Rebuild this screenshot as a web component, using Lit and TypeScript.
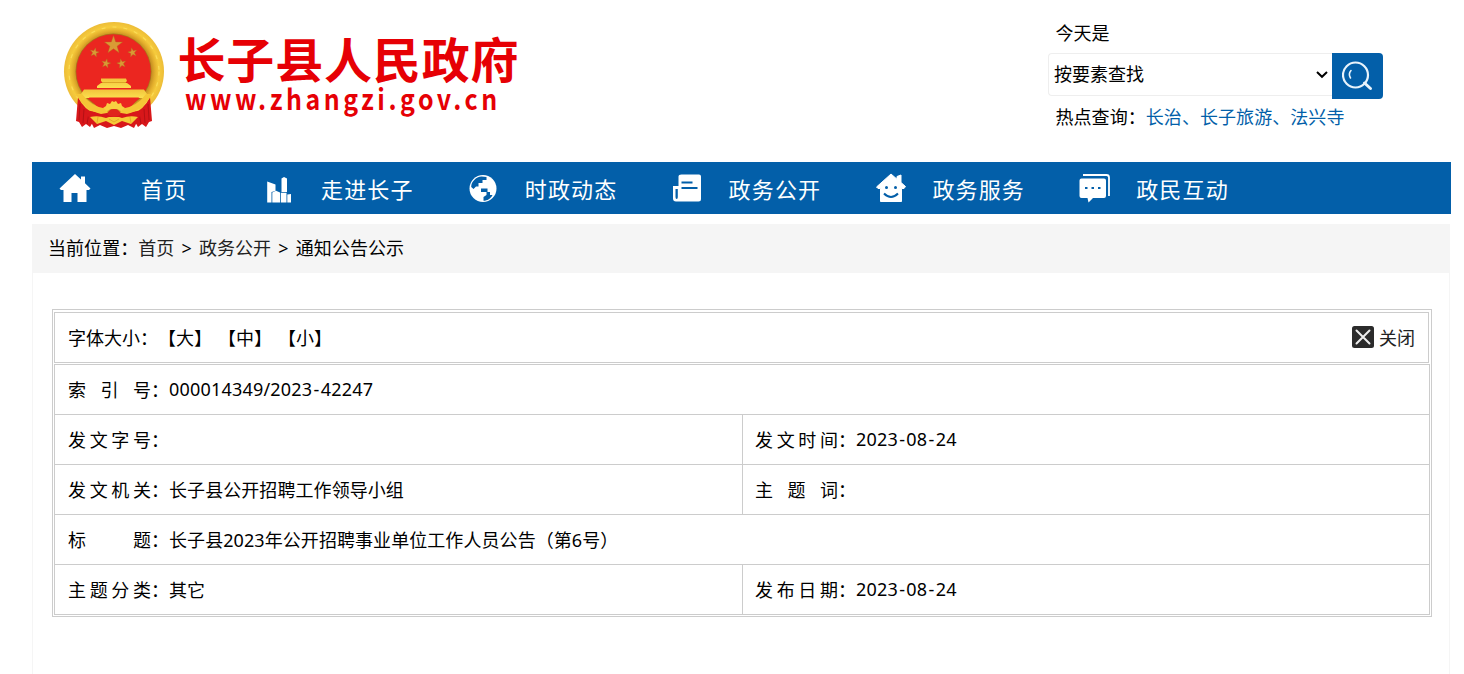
import { LitElement, html, svg, css, nothing } from 'lit';
import { customElement, property } from 'lit/decorators.js';

const fontStack = css`'Noto Sans', 'Noto Sans CJK SC', sans-serif`;

const navIcons: Record<string, unknown> = {
  home: svg`<path d="M16 1 L0.5 15.5 L2 17 H4.5 V29 H12.5 V20 H18.5 V29 H27.5 V17 H30 L31.5 15.5 L26 10.2 V3.5 H22 V6.5 Z"/>`,
  city: svg`
    <path d="M2.200 8.500 L10.500 11.500 V18 L6.500 19 V29.500 H2.200 Z"/>
    <path d="M16.500 5.500 L19 4 L22 5.500 V19 H16.500 Z"/>
    <path d="M7.300 19.500 L11 17.800 L15 19.500 V29.500 H7.300 Z"/>
    <path d="M15.800 19.800 H21.500 V29.500 H15.800 Z M22.300 21.500 L26 21 V29.500 H22.300 Z"/>`,
  globe: svg`
    <circle cx="14" cy="15.500" r="13.500"/>
    <path d="M12.500 3.500 L17.500 4 V7 H13.500 V10 H9.500 V13.500 H7 L4.500 16 L2.200 14 C2.200 8.500 7 4 12.500 3.500 Z" class="cut"/>
    <path d="M12 15.500 H18.500 V19 H21 V22 H23.500 C21.500 26 18.500 27.500 14.500 27.800 V24 L17.500 22 V19 H12 Z" class="cut"/>`,
  news: svg`
    <path d="M8.500 1.500 H26 Q28 1.500 28 3.500 V26 Q28 28.500 25.500 28.500 H3 Q0 28.500 0 25.500 V13 H5.500 V3.500 Q5.500 1.500 8.500 1.500 Z"/>
    <path d="M2.500 16 H4.800 V24 Q4.800 26 3.700 26 Q2.500 26 2.500 24 Z" class="cut"/>
    <path d="M8.500 9.500 H19.500 M8.500 15 H24.500" class="cut-line"/>`,
  service: svg`
    <path d="M15 1 L21 6.200 V3.500 L25 2 V9.500 L29.500 13.500 L28 15.500 H25.500 V28.500 H4.500 V15.500 H2 L0.500 14 Z" stroke="#fff" stroke-linejoin="round"/>
    <circle cx="10.500" cy="14.500" r="1.500" class="cut"/>
    <circle cx="19.500" cy="14.500" r="1.500" class="cut"/>
    <path d="M8 20.500 Q15 27.500 22 20.500" class="cut-line"/>`,
  chat: svg`
    <path d="M3 2 H26.500 Q29 2 29 4.500 V23" fill="none" stroke="#fff" stroke-width="1.800"/>
    <path d="M1.500 5.500 H24 Q26 5.500 26 7.500 V23 Q26 25 24 25 H13 L8.500 29.500 L7.500 25 H1.500 Q-0.500 25 -0.500 23 V7.500 Q-0.500 5.500 1.500 5.500 Z"/>
    <path d="M5 15 H7.500 M11.500 15 H14 M18 15 H20.500" class="cut-line"/>`
};

@customElement('site-logo')
export class SiteLogo extends LitElement {
  static styles = css`
    :host {
      display: block;
    }
    svg {
      display: block;
    }
    text {
      font-family: 'Noto Sans CJK SC', sans-serif;
      font-weight: 700;
      fill: #e60005;
    }
    .name {
      font-size: 48px;
    }
    .url {
      font-size: 29px;
    }
  `;

  star(cx: number, cy: number, r: number, turn = 0) {
    const points = Array.from({ length: 10 }, (_, i) => {
      const a = (i * 36 - 90 + turn) * Math.PI / 180;
      const d = i % 2 ? r * 0.4 : r;
      return `${(cx + d * Math.cos(a)).toFixed(2)},${(cy + d * Math.sin(a)).toFixed(2)}`;
    });
    return svg`<polygon points=${points.join(' ')} fill="#d99a35" stroke="#b5651f" stroke-width="0.4"/>`;
  }

  render() {
    return html`
      <svg width="470" height="120" viewBox="60 16 470 120">
        <defs>
          <radialGradient id="gold" cx="50%" cy="50%" r="50%">
            <stop offset="0.74" stop-color="#c08a20"/>
            <stop offset="0.82" stop-color="#e3ae2c"/>
            <stop offset="0.9" stop-color="#f6cb3c"/>
            <stop offset="1" stop-color="#edbd38"/>
          </radialGradient>
          <linearGradient id="gate" x1="0" y1="0" x2="0" y2="1">
            <stop offset="0" stop-color="#f2c33b"/>
            <stop offset="1" stop-color="#fbe04f"/>
          </linearGradient>
        </defs>
        <ellipse cx="114" cy="71.500" rx="50" ry="49.500" fill="url(#gold)"/>
        <ellipse cx="114" cy="71.500" rx="45" ry="44.500" fill="none" stroke="#fbdc58" stroke-width="1.200" stroke-dasharray="4 7"/>
        <circle cx="113.500" cy="71.500" r="38" fill="#a97419"/>
        <circle cx="113.500" cy="71.500" r="37.300" fill="#eb2620"/>
        ${this.star(113.5, 45, 9.5)}
        ${this.star(94.5, 52.5, 4.8, 12)}
        ${this.star(132.5, 52.5, 4.8, -12)}
        ${this.star(106, 63.5, 4.8, 12)}
        ${this.star(121.5, 63.5, 4.8, -12)}
        <path d="M101 78.500 H126 L127 81 L125 83 H127 L131 86 V88 H97 V86 L101 83 H103 L101 81 Z" fill="url(#gate)"/>
        <path d="M102 82.500 H126" stroke="#d59a20" stroke-width="0.800"/>
        <path d="M84 89.500 H144 L147 94 L144 98 H84 L81 94 Z" fill="url(#gate)"/>
        <path d="M89 97.500 H139 L130 108 H98 Z" fill="#eb2620"/>
        <path d="M78 97 Q84 110 97 115 L90 127 L86 124 L82 127 L79 122 L76 121 Z" fill="#d8171a"/>
        <path d="M150 97 Q144 110 131 115 L138 127 L142 124 L146 127 L149 122 L152 121 Z" fill="#d8171a"/>
        <path d="M80 104 L79 120 M84 109 L83 123 M89 113 L87 124 M148 104 L149 120 M144 109 L145 123 M139 113 L141 124" stroke="#b01014" stroke-width="0.900"/>
        <path d="M85 110 L102 113 H126 L143 110 L134 128 L128 125 L121 128 L114 126 L107 128 L100 125 L94 128 Z" fill="#d8171a"/>
        <path d="M76 94 Q84 110 101 114 L107 113 V109 Q91 107 82 94 Z M152 94 Q144 110 127 114 L121 113 V109 Q137 107 146 94 Z" fill="#f5c636"/>
        <path d="M103 108 L106 106 L107 103 L110 104 L112 101 L114 102 L116 101 L118 104 L121 103 L122 106 L125 108 L121 111 L117 109 H111 L107 111 Z" fill="#f8d041"/>
        <path d="M107 114 Q109 109 114 109 Q119 109 121 114 Q118 117 114 117 Q110 117 107 114 Z" fill="#e0251d"/>
        <path d="M90 117 Q98 115 106 118 L109 117 H119 L122 118 Q130 115 138 117 L131 124 L122 121 L114 125 L106 121 L97 124 Z" fill="#f6ca38"/>
        <path d="M98 117 L97 123 M130 117 L131 123 M109 119 L114 122 L119 119" fill="none" stroke="#dfa327" stroke-width="0.800"/>
        <text class="name" x="177.500" y="78" textLength="341" lengthAdjust="spacing">长子县人民政府</text>
        <text class="url" transform="translate(185 110) scale(0.86 1)" x="0" y="0" textLength="363" lengthAdjust="spacing">www.zhangzi.gov.cn</text>
      </svg>
    `;
  }
}

@customElement('site-search')
export class SiteSearch extends LitElement {
  static styles = css`
    :host {
      display: block;
      width: 335px;
      font-size: 18px;
      line-height: 24px;
    }
    .today,
    .hot {
      padding-left: 7.5px;
    }
    .bar {
      display: flex;
      align-items: flex-start;
      margin: 8px 0 6px;
    }
    .select {
      display: flex;
      align-items: center;
      justify-content: space-between;
      box-sizing: border-box;
      width: 284px;
      height: 43px;
      padding: 0 4px 0 5px;
      border: 1px solid #eee;
      border-right: 0;
      border-radius: 4px 0 0 4px;
    }
    .select span {
      padding-bottom: 2px;
    }
    .button {
      display: flex;
      align-items: center;
      justify-content: center;
      width: 51px;
      height: 46px;
      background: #035fa9;
      border-radius: 0 4px 4px 0;
    }
    .hot {
      letter-spacing: 0.06px;
    }
    a {
      color: #035fa9;
    }
  `;

  render() {
    return html`
      <div class="today">今天是</div>
      <div class="bar">
        <div class="select">
          <span>按要素查找</span>
          <svg width="12" height="8" viewBox="0 0 12 8" fill="none" stroke="#000" stroke-width="2">
            <path d="M1 1 L6 5.800 L11 1"/>
          </svg>
        </div>
        <div class="button">
          <svg width="32" height="30" viewBox="0 0 32 30" fill="none" stroke="#e8f3fb" stroke-linecap="round">
            <circle cx="13.500" cy="14" r="12.500" stroke-width="2.200"/>
            <path d="M9 9.500 Q6 13 8.500 17" stroke-width="1.600"/>
            <path d="M22.500 22 L28.500 27.500" stroke-width="3"/>
          </svg>
        </div>
      </div>
      <div class="hot">热点查询：<a>长治</a><a>、</a><a>长子旅游</a><a>、</a><a>法兴寺</a></div>
    `;
  }
}

@customElement('site-nav')
export class SiteNav extends LitElement {
  static styles = css`
    :host {
      display: flex;
      height: 52px;
      background: #035fa9;
      color: #fff;
    }
    .item {
      display: flex;
      align-items: center;
      width: 203.8px;
      box-sizing: border-box;
      padding-left: 27px;
      font-size: 22px;
      letter-spacing: 1.15px;
      line-height: 52px;
    }
    .item.first {
      width: 206px;
    }
    .icon {
      width: 32px;
      height: 30px;
      margin-right: 24px;
      fill: #fff;
      overflow: visible;
    }
    .first .icon {
      margin-right: 50px;
    }
    .label {
      padding-top: 1px;
    }
    .cut {
      fill: #035fa9;
    }
    .cut-line {
      fill: none;
      stroke: #035fa9;
      stroke-width: 2;
    }
  `;

  items = [
    { icon: 'home', label: '首页' },
    { icon: 'city', label: '走进长子' },
    { icon: 'globe', label: '时政动态' },
    { icon: 'news', label: '政务公开' },
    { icon: 'service', label: '政务服务' },
    { icon: 'chat', label: '政民互动' }
  ];

  render() {
    return this.items.map((item, i) => html`
      <div class="item ${i === 0 ? 'first' : ''}">
        <svg class="icon" viewBox="0 0 32 30">${navIcons[item.icon]}</svg>
        <span class="label">${item.label}</span>
      </div>
    `);
  }
}

@customElement('info-field')
export class InfoField extends LitElement {
  static styles = css`
    :host {
      display: flex;
      align-items: center;
      height: 49px;
      box-sizing: border-box;
      padding: 0 0 2px 13px;
      font-size: 18px;
      white-space: nowrap;
    }
    .label {
      width: 83px;
      text-align-last: justify;
    }
    .value {
      letter-spacing: 0.07px;
    }
    .numeric {
      letter-spacing: 0.2px;
    }
    .dash {
      padding: 0 1.2px;
    }
  `;

  @property() label = '';
  @property() value = '';

  renderValue() {
    if (!this.value) {
      return nothing;
    }
    if (!/^[\d/-]+$/.test(this.value)) {
      return html`<span class="value">${this.value}</span>`;
    }
    const parts = this.value.split('-');
    return html`<span class="numeric">${parts.map((p, i) => html`${i ? html`<span class="dash">-</span>` : nothing}${p}`)}</span>`;
  }

  render() {
    return html`
      <span class="label">${this.label}</span><span>：</span>
      ${this.renderValue()}
    `;
  }
}

@customElement('app-root')
export class AppRoot extends LitElement {
  static styles = css`
    :host {
      display: block;
      box-sizing: border-box;
      height: 674px;
      padding: 0 14px 0 32px;
      overflow: hidden;
      background: #fff;
      color: #000;
      font-family: ${fontStack};
      font-size: 18px;
    }
    header {
      display: flex;
      justify-content: space-between;
      height: 162px;
      box-sizing: border-box;
      padding: 16px 67px 0 28px;
    }
    site-search {
      margin-top: 5px;
    }
    site-nav {
      width: 1419px;
    }
    .crumbs {
      height: 49px;
      box-sizing: border-box;
      margin-top: 10px;
      padding-left: 16px;
      background: #f5f5f5;
      line-height: 49px;
      white-space: pre;
      letter-spacing: 0.05px;
      word-spacing: 2.4px;
    }
    .crumbs a {
      color: #222;
    }
    .content {
      height: 401px;
      box-sizing: border-box;
      padding: 36px 17px 0 19px;
      border: 1px solid #f5f5f5;
      border-width: 0 1px;
    }
    .info {
      height: 308px;
      box-sizing: border-box;
      padding: 2px 1px 1px;
      border: 1px solid #ccc;
    }
    .tools {
      display: flex;
      align-items: center;
      justify-content: space-between;
      box-sizing: border-box;
      width: 1375px;
      height: 51px;
      margin-bottom: 1px;
      padding: 0 13px 2px;
      border: 1px solid #ccc;
    }
    .sizes {
      display: flex;
    }
    .sizes a {
      margin-right: 6px;
    }
    .close {
      display: flex;
      align-items: center;
      gap: 5px;
      color: #222;
    }
    .fields {
      display: grid;
      grid-template-columns: 687px 686px;
      gap: 1px;
      width: 1374px;
      border: 1px solid #ccc;
      background: #ccc;
    }
    info-field {
      background: #fff;
    }
    .wide {
      grid-column: 1 / 3;
    }
    .right {
      padding-left: 12px;
    }
  `;

  fields = [
    { label: '索引号', value: '000014349/2023-42247', cls: 'wide' },
    { label: '发文字号', value: '', cls: '' },
    { label: '发文时间', value: '2023-08-24', cls: 'right' },
    { label: '发文机关', value: '长子县公开招聘工作领导小组', cls: '' },
    { label: '主题词', value: '', cls: 'right' },
    { label: '标题', value: '长子县2023年公开招聘事业单位工作人员公告（第6号）', cls: 'wide' },
    { label: '主题分类', value: '其它', cls: '' },
    { label: '发布日期', value: '2023-08-24', cls: 'right' }
  ];

  render() {
    return html`
      <header>
        <site-logo></site-logo>
        <site-search></site-search>
      </header>
      <site-nav></site-nav>
      <div class="crumbs">当前位置：<a>首页</a> &gt; <a>政务公开</a> &gt; 通知公告公示</div>
      <div class="content">
        <div class="info">
          <div class="tools">
            <div class="sizes"><span>字体大小：</span><a>【大】</a><a>【中】</a><a>【小】</a></div>
            <div class="close">
              <svg width="22" height="22" viewBox="0 0 22 22">
                <rect width="22" height="22" rx="2.500" fill="#2b2b2b"/>
                <path d="M4.500 4.500 L17.500 17.500 M17.500 4.500 L4.500 17.500" stroke="#eee" stroke-width="2" stroke-linecap="round"/>
              </svg>
              <span>关闭</span>
            </div>
          </div>
          <div class="fields">
            ${this.fields.map((f) => html`<info-field class=${f.cls} .label=${f.label} .value=${f.value}></info-field>`)}
          </div>
        </div>
      </div>
    `;
  }
}
